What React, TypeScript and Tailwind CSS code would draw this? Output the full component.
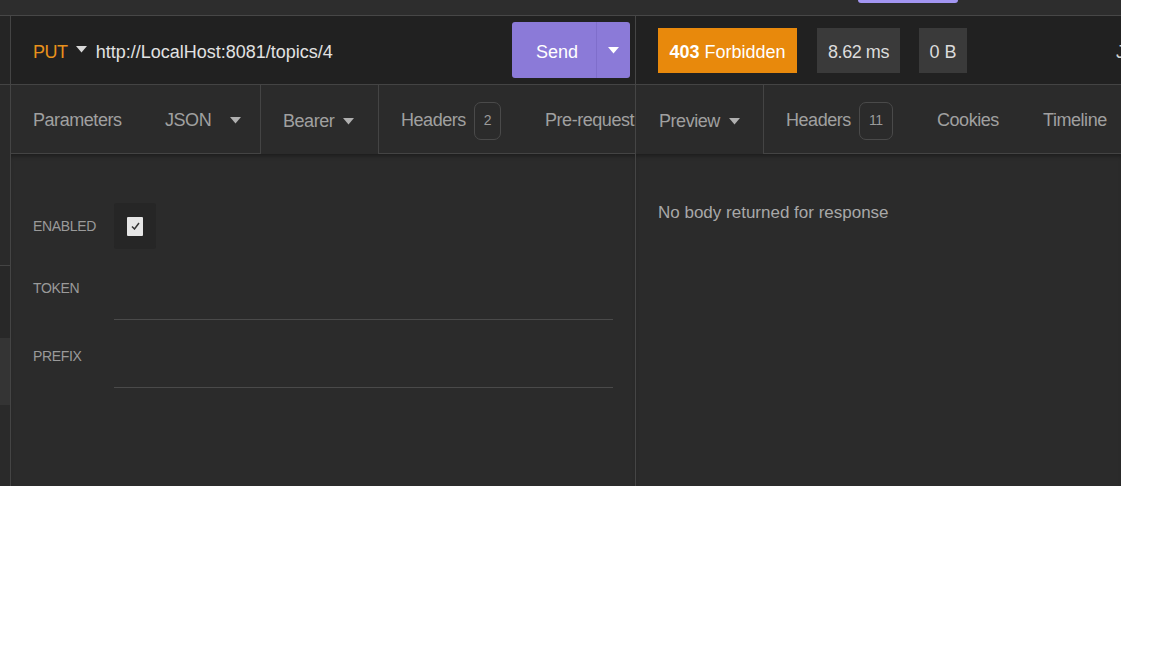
import React from "react";

function Caret({ className = "" }: { className?: string }) {
  return (
    <svg width="11" height="7" viewBox="0 0 11 7" className={className}>
      <path d="M0 0 L11 0 L5.5 6.5 Z" fill="currentColor" />
    </svg>
  );
}

function Badge({ n, w }: { n: string; w: string }) {
  return (
    <span
      className={`ml-[8px] flex h-[38px] ${w} shrink-0 items-center justify-center rounded-[7px] border border-[#4a4a4a] text-[14px] text-[#9a9a9a]`}
    >
      {n}
    </span>
  );
}

export default function App() {
  return (
    <div className="h-[648px] w-[1152px] bg-white" style={{ fontFamily: '"Liberation Sans", Arial, sans-serif' }}>
      <div className="flex h-[486px] w-[1121px] flex-col overflow-hidden bg-[#2b2b2b]">
        {/* top strip */}
        <div className="flex h-[16px] shrink-0 border-b border-[#474747] bg-[#2d2d2d]">
          <div className="ml-[858px] h-[3px] w-[100px] rounded-b-[4px] bg-[#a396f2]" />
        </div>

        <div className="flex flex-1">
          {/* sidebar */}
          <div className="flex w-[11px] shrink-0 flex-col border-r border-[#444]">
            <div className="h-[69px] border-b border-[#444] bg-[#252525]" />
            <div className="h-[181px] border-b border-[#444] bg-[#2a2a2a]" />
            <div className="h-[72px] bg-[#282828]" />
            <div className="h-[67px] bg-[#343434]" />
            <div className="flex-1 bg-[#2a2a2a]" />
          </div>

          {/* request pane */}
          <div className="flex w-[625px] shrink-0 flex-col border-r border-[#454545]">
            <div className="flex h-[69px] items-center border-b border-[#444] bg-[#212121] pl-[22px] pr-[5px]">
              <span className="pt-[4px] text-[18px] tracking-tight text-[#e8911c]">PUT</span>
              <Caret className="ml-[8px] mb-[2px] text-[#d8d8d8]" />
              <span className="ml-[9px] pt-[4px] text-[18px] text-[#e2e2e2]">http://LocalHost:8081/topics/4</span>
              <div className="ml-auto flex h-[56px] w-[118px] overflow-hidden rounded-[3px] bg-[#8b7ad8]">
                <div className="flex w-[84px] items-center justify-center pl-[6px] pt-[4px] text-[18px] text-white">Send</div>
                <div className="flex flex-1 items-center justify-center border-l border-[#7f6ecb] text-white">
                  <Caret />
                </div>
              </div>
            </div>

            <div className="flex h-[69px] text-[18px] tracking-tight text-[#a0a0a0]">
              <div className="flex w-[132px] items-center border-b border-[#444] pl-[22px] pt-[3px]">Parameters</div>
              <div className="flex w-[118px] items-center border-b border-r border-[#444] pl-[22px] pt-[3px]">
                JSON
                <Caret className="ml-[19px] text-[#b0b0b0]" />
              </div>
              <div className="flex w-[118px] items-center border-r border-[#444] pl-[22px] pt-[3px]">
                Bearer
                <Caret className="ml-[9px] text-[#b0b0b0]" />
              </div>
              <div className="flex w-[144px] items-center border-b border-[#444] pl-[22px] pt-[3px]">
                Headers
                <Badge n="2" w="w-[27px]" />
              </div>
              <div className="flex flex-1 items-center overflow-hidden whitespace-nowrap border-b border-[#444] pl-[22px] pt-[3px]">
                Pre-request
              </div>
            </div>

            <div className="flex-1 bg-[#2b2b2b] pl-[22px] pr-[22px] pt-[49px] shadow-[inset_0_4px_4px_-2px_rgba(0,0,0,0.35)]">
              <div className="flex h-[46px] items-center">
                <span className="w-[81px] text-[14px] tracking-tight text-[#9a9a9a]">ENABLED</span>
                <div className="flex h-[46px] w-[42px] items-center justify-center rounded-[3px] bg-[#262626]">
                  <div className="flex h-[19px] w-[16px] items-center justify-center rounded-[1px] bg-[#e6e6e6]">
                    <svg width="9" height="8" viewBox="0 0 9 8">
                      <path d="M1 4.5 L3.5 7 L8 1" stroke="#333" strokeWidth="1.5" fill="none" />
                    </svg>
                  </div>
                </div>
              </div>
              <div className="mt-[8px] flex items-center">
                <span className="w-[81px] text-[14px] tracking-tight text-[#9a9a9a]">TOKEN</span>
                <div className="h-[63px] flex-1 border-b border-[#4a4a4a]" />
              </div>
              <div className="flex items-center">
                <span className="w-[81px] pt-[4px] text-[14px] tracking-tight text-[#9a9a9a]">PREFIX</span>
                <div className="h-[68px] flex-1 border-b border-[#4a4a4a]" />
              </div>
            </div>
          </div>

          {/* response pane */}
          <div className="flex min-w-0 flex-1 flex-col overflow-hidden">
            <div className="flex h-[69px] items-center whitespace-nowrap border-b border-[#444] bg-[#212121] pl-[22px]">
              <div className="flex h-[45px] w-[139px] shrink-0 items-center justify-center bg-[#e8890c] pt-[4px] text-[18px] text-white">
                <span className="font-bold">403</span>
                <span className="ml-[5px]">Forbidden</span>
              </div>
              <div className="ml-[20px] flex h-[45px] w-[83px] shrink-0 items-center justify-center bg-[#3a3a3a] pt-[4px] text-[18px] tracking-tight text-[#dcdcdc]">
                8.62 ms
              </div>
              <div className="ml-[19px] flex h-[45px] w-[48px] shrink-0 items-center justify-center bg-[#3a3a3a] pt-[4px] text-[18px] text-[#dcdcdc]">
                0 B
              </div>
              <span className="ml-[149px] shrink-0 pt-[4px] text-[18px] text-[#cfcfcf]">Just Now</span>
            </div>

            <div className="flex h-[69px] whitespace-nowrap text-[18px] tracking-tight text-[#a0a0a0]">
              <div className="flex w-[128px] shrink-0 items-center border-r border-[#444] pl-[23px] pt-[3px]">
                Preview
                <Caret className="ml-[9px] text-[#b0b0b0]" />
              </div>
              <div className="flex w-[151px] shrink-0 items-center border-b border-[#444] pl-[22px] pt-[3px]">
                Headers
                <Badge n="11" w="w-[34px]" />
              </div>
              <div className="flex w-[106px] shrink-0 items-center border-b border-[#444] pl-[22px] pt-[3px]">Cookies</div>
              <div className="flex flex-1 items-center border-b border-[#444] pl-[22px] pt-[3px]">Timeline</div>
            </div>

            <div className="flex-1 bg-[#2b2b2b] pl-[22px] pt-[48px] shadow-[inset_0_4px_4px_-2px_rgba(0,0,0,0.35)]">
              <p className="text-[17px] leading-[22px] text-[#a8a8a8]">No body returned for response</p>
            </div>
          </div>
        </div>
      </div>
    </div>
  );
}
